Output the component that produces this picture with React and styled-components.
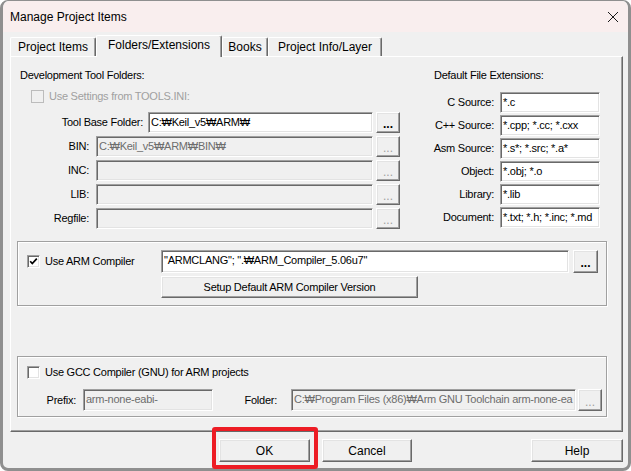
import React from "react";
import styled, { createGlobalStyle } from "styled-components";

const GlobalStyle = createGlobalStyle`
  html, body {
    margin: 0;
    background: #ffffff;
  }
  body {
    font-family: "Liberation Sans", Arial, sans-serif;
    font-size: 11px;
  }
`;

const Window = styled.div`
  position: relative;
  width: 631px;
  height: 471px;
  box-sizing: border-box;
  border: 3px solid #8f8f8f;
  border-top-width: 1px;
  border-radius: 8px;
  background: #f0f0f0;
  display: flex;
  flex-direction: column;
`;

const TitleBar = styled.div`
  height: 31px;
  flex: none;
  display: flex;
  align-items: center;
  justify-content: space-between;
  padding: 0 9px 0 7px;
  background: #f9eeee;
  border-radius: 7px 7px 0 0;
  font-size: 12px;
  color: #000;
`;

const Body = styled.div`
  display: flex;
  flex-direction: column;
  padding: 3px 5px 0 7px;
`;

const TabStrip = styled.div`
  display: flex;
  align-items: flex-end;
  height: 21px;
  position: relative;
  z-index: 2;
`;

const Tab = styled.div`
  width: ${({ $w }) => $w}px;
  height: ${({ $active }) => ($active ? 22 : 19)}px;
  margin-bottom: ${({ $active }) => ($active ? -1 : 0)}px;
  box-sizing: border-box;
  border-top: 1px solid #fff;
  border-left: 1px solid #fff;
  border-right: 1px solid #696969;
  box-shadow: inset -1px 0 #a0a0a0;
  border-radius: 2px 2px 0 0;
  background: #f0f0f0;
  display: flex;
  align-items: ${({ $active }) => ($active ? "flex-start" : "center")};
  padding-top: ${({ $active }) => ($active ? 2 : 0)}px;
  justify-content: center;
  font-size: 12px;
  color: #000;
  white-space: nowrap;
`;

const Panel = styled.div`
  height: 376px;
  box-sizing: border-box;
  border: 1px solid;
  border-color: #fff #696969 #696969 #fff;
  box-shadow: inset -1px -1px #a0a0a0;
  padding: 12px 15px 0 6px;
  display: flex;
  flex-direction: column;
  letter-spacing: -0.25px;
  line-height: 13px;
`;

const TopSection = styled.div`
  display: flex;
  margin-left: 3px;
`;

const Column = styled.div`
  width: ${({ $w }) => $w}px;
  margin-left: ${({ $ml }) => $ml || 0}px;
  display: flex;
  flex-direction: column;
`;

const Heading = styled.div`
  height: 13px;
  padding-left: ${({ $pl }) => $pl || 0}px;
  color: #000;
  white-space: nowrap;
`;

const Rows = styled.div`
  display: flex;
  flex-direction: column;
  gap: ${({ $gap }) => $gap}px;
  margin-top: ${({ $mt }) => $mt}px;
`;

const FieldRow = styled.div`
  display: flex;
  height: ${({ $h }) => $h || 21}px;
  margin-top: ${({ $mt }) => $mt || 0}px;
`;

const FieldLabel = styled.div`
  width: ${({ $w }) => $w}px;
  flex: none;
  box-sizing: border-box;
  padding-right: ${({ $pr }) => ($pr === undefined ? 6 : $pr)}px;
  text-align: right;
  align-self: center;
  white-space: nowrap;
  color: #000;
`;

const Edit = styled.div`
  flex: ${({ $w }) => ($w ? "none" : 1)};
  width: ${({ $w }) => ($w ? `${$w}px` : "auto")};
  min-width: 0;
  box-sizing: border-box;
  border: 1px solid;
  border-color: #a0a0a0 #fff #fff #a0a0a0;
  box-shadow: inset 1px 1px #696969, inset -1px -1px #e3e3e3;
  background: ${({ $disabled }) => ($disabled ? "#f0f0f0" : "#fff")};
  color: ${({ $disabled }) => ($disabled ? "#6d6d6d" : "#000")};
  padding: 2px 2px 0;
  line-height: 14px;
  white-space: nowrap;
  overflow: hidden;
`;

const Button = styled.div`
  width: ${({ $w }) => $w}px;
  flex: none;
  margin-left: ${({ $ml }) => $ml || 0}px;
  box-sizing: border-box;
  border: 1px solid;
  border-color: #fff #696969 #696969 #fff;
  box-shadow: inset -1px -1px #a0a0a0, inset 1px 1px #e3e3e3;
  background: #f0f0f0;
  display: flex;
  align-items: center;
  justify-content: center;
  color: ${({ $disabled }) => ($disabled ? "#a0a0a0" : "#000")};
  font-size: ${({ $fs }) => $fs || 11}px;
  white-space: nowrap;
`;

const Dots = styled.span`
  font-size: 12px;
  font-weight: ${({ $bold }) => ($bold ? 700 : 400)};
  letter-spacing: 0;
  margin-top: 4px;
`;

const CheckRow = styled.div`
  display: flex;
  align-items: center;
  gap: 5px;
  height: 13px;
  margin-left: ${({ $ml }) => $ml || 0}px;
  margin-top: ${({ $mt }) => $mt || 0}px;
  color: ${({ $disabled }) => ($disabled ? "#a0a0a0" : "#000")};
  white-space: nowrap;
  align-self: ${({ $self }) => $self || "auto"};
`;

const Box = styled.span`
  width: 13px;
  height: 13px;
  flex: none;
  box-sizing: border-box;
  border: 1px solid;
  border-color: ${({ $disabled }) =>
    $disabled ? "#bcbcbc" : "#a0a0a0 #fff #fff #a0a0a0"};
  box-shadow: ${({ $disabled }) =>
    $disabled ? "none" : "inset 1px 1px #696969, inset -1px -1px #e3e3e3"};
  background: ${({ $disabled }) => ($disabled ? "#f0f0f0" : "#fff")};
  display: flex;
  align-items: center;
  justify-content: center;
`;

const Group = styled.div`
  box-sizing: border-box;
  border: 1px solid #a0a0a0;
  box-shadow: inset 1px 1px #fff, 1px 1px #fff;
  margin-top: ${({ $mt }) => $mt}px;
  padding: ${({ $pad }) => $pad};
`;

const CompilerGrid = styled.div`
  display: grid;
  grid-template-columns: 130px 1fr 25px;
  grid-template-rows: 23px 22px;
  column-gap: 4px;
  row-gap: 3px;
`;

const ButtonRow = styled.div`
  display: flex;
  height: 23px;
  margin-top: 7px;
`;

const Highlight = styled.div`
  position: relative;
  margin-left: ${({ $ml }) => $ml || 0}px;
  display: flex;
`;

const RedFrame = styled.div`
  position: absolute;
  left: -7px;
  top: -12px;
  width: 106px;
  height: 42px;
  box-sizing: border-box;
  border: 4px solid #ed1c24;
  border-radius: 3px;
  pointer-events: none;
`;

const Check = ({ checked, disabled, children, ...rest }) => (
  <CheckRow $disabled={disabled} {...rest}>
    <Box $disabled={disabled}>
      {checked && (
        <svg width="9" height="9" viewBox="0 0 9 9">
          <path d="M1.2 4.2 L3.3 6.5 L7.8 1.6" fill="none" stroke="#000" strokeWidth="1.7" />
        </svg>
      )}
    </Box>
    <span>{children}</span>
  </CheckRow>
);

const Browse = ({ disabled, w = 24, ml = 3 }) => (
  <Button $w={w} $ml={ml} $disabled={disabled}>
    <Dots $bold={!disabled}>...</Dots>
  </Button>
);

const toolRows = [
  { label: "BIN:", value: "C:₩Keil_v5₩ARM₩BIN₩" },
  { label: "INC:", value: "" },
  { label: "LIB:", value: "" },
  { label: "Regfile:", value: "" },
];

const extensions = [
  ["C Source:", "*.c"],
  ["C++ Source:", "*.cpp; *.cc; *.cxx"],
  ["Asm Source:", "*.s*; *.src; *.a*"],
  ["Object:", "*.obj; *.o"],
  ["Library:", "*.lib"],
  ["Document:", "*.txt; *.h; *.inc; *.md"],
];

const tabs = [
  { name: "Project Items", w: 86 },
  { name: "Folders/Extensions", w: 126, active: true },
  { name: "Books", w: 46 },
  { name: "Project Info/Layer", w: 114 },
];

export default function App() {
  return (
    <>
      <GlobalStyle />
      <Window>
        <TitleBar>
          <span>Manage Project Items</span>
          <svg width="12" height="12" viewBox="0 0 12 12">
            <path d="M1 1 L11 11 M11 1 L1 11" stroke="#1a1a1a" strokeWidth="1" fill="none" />
          </svg>
        </TitleBar>
        <Body>
          <TabStrip>
            {tabs.map((t) => (
              <Tab key={t.name} $w={t.w} $active={t.active}>
                {t.name}
              </Tab>
            ))}
          </TabStrip>
          <Panel>
            <TopSection>
              <Column $w={380}>
                <Heading>Development Tool Folders:</Heading>
                <Check disabled $ml={11} $mt={8}>
                  Use Settings from TOOLS.INI:
                </Check>
                <Rows $gap={3} $mt={9}>
                  <FieldRow>
                    <FieldLabel $w={128} $pr={5}>Tool Base Folder:</FieldLabel>
                    <Edit>C:₩Keil_v5₩ARM₩</Edit>
                    <Browse />
                  </FieldRow>
                  {toolRows.map((r) => (
                    <FieldRow key={r.label}>
                      <FieldLabel $w={76} $pr={7}>{r.label}</FieldLabel>
                      <Edit $disabled>{r.value}</Edit>
                      <Browse disabled />
                    </FieldRow>
                  ))}
                </Rows>
              </Column>
              <Column $w={180} $ml={20}>
                <Heading $pl={14}>Default File Extensions:</Heading>
                <Rows $gap={2} $mt={10}>
                  {extensions.map(([label, value]) => (
                    <FieldRow key={label}>
                      <FieldLabel $w={80}>{label}</FieldLabel>
                      <Edit $w={100}>{value}</Edit>
                    </FieldRow>
                  ))}
                </Rows>
              </Column>
            </TopSection>

            <Group $mt={12} $pad="8px 8px 7px 9px">
              <CompilerGrid>
                <Check checked $self="center">Use ARM Compiler</Check>
                <Edit>"ARMCLANG"; ".₩ARM_Compiler_5.06u7"</Edit>
                <Browse w={25} ml={0} />
                <div />
                <Button $w={257}>Setup Default ARM Compiler Version</Button>
              </CompilerGrid>
            </Group>

            <Group $mt={50} $pad="9px 4px 5px 9px">
              <Check>Use GCC Compiler (GNU) for ARM projects</Check>
              <FieldRow $h={22} $mt={10}>
                <FieldLabel $w={56} $pr={7}>Prefix:</FieldLabel>
                <Edit $w={130} $disabled>arm-none-eabi-</Edit>
                <FieldLabel $w={78} $pr={14}>Folder:</FieldLabel>
                <Edit $w={285} $disabled>
                  C:₩Program Files (x86)₩Arm GNU Toolchain arm-none-ea
                </Edit>
                <Browse disabled ml={2} />
              </FieldRow>
            </Group>
          </Panel>

          <ButtonRow>
            <Highlight $ml={209}>
              <Button $w={91} $fs={12}>OK</Button>
              <RedFrame />
            </Highlight>
            <Button $w={90} $ml={12} $fs={12}>Cancel</Button>
            <Button $w={92} $ml={119} $fs={12}>Help</Button>
          </ButtonRow>
        </Body>
      </Window>
    </>
  );
}
